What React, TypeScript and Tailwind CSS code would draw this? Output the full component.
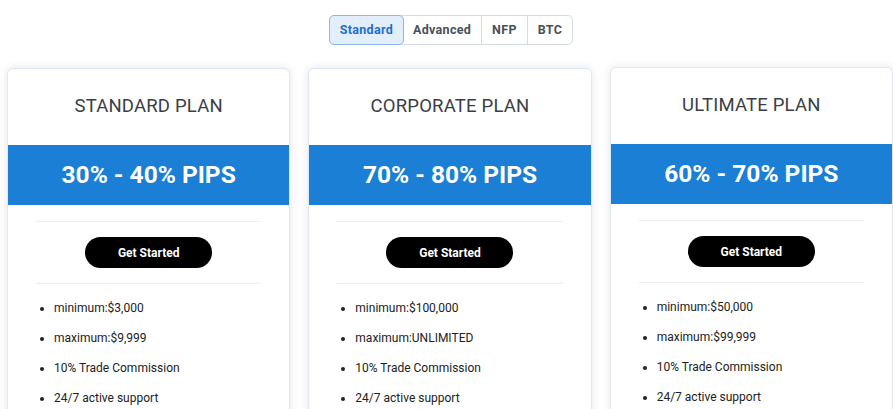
// Pricing plans with a tab switcher

const tabs = ['Standard', 'Advanced', 'NFP', 'BTC'];

type Plan = {
  name: string;
  pips: string;
  min: string;
  max: string;
};

const plans: Plan[] = [
  { name: 'STANDARD PLAN', pips: '30% - 40% PIPS', min: '$3,000', max: '$9,999' },
  { name: 'CORPORATE PLAN', pips: '70% - 80% PIPS', min: '$100,000', max: 'UNLIMITED' },
  { name: 'ULTIMATE PLAN', pips: '60% - 70% PIPS', min: '$50,000', max: '$99,999' },
];

const PlanCard = ({ plan, lifted }: { plan: Plan; lifted?: boolean }) => (
  <div
    className={`bg-white rounded-md border border-[#dde8f6] shadow-[0_0_10px_rgba(0,0,0,0.1)] h-[360px] overflow-hidden ${
      lifted ? '-mt-px' : ''
    }`}
  >
    <div className="h-[76px] pb-px flex items-center justify-center text-[18.5px] text-[#3b3e44] tracking-[0.2px]">
      {plan.name}
    </div>
    <div className="h-[60px] bg-[#1a7fd5] flex items-center justify-center text-white text-[24.5px] font-bold">
      {plan.pips}
    </div>
    <div className="mx-7 mt-4 border-t border-[#eceef1]" />
    <div className="flex justify-center py-[15px]">
      <button className="w-[127px] h-[31px] rounded-full bg-black text-white text-[12px] font-bold">
        Get Started
      </button>
    </div>
    <div className="mx-7 border-t border-[#eceef1]" />
    <ul className="list-disc pl-[46px] pt-[9px] text-[12px] text-[#222] leading-[30px]">
      <li>minimum:{plan.min}</li>
      <li>maximum:{plan.max}</li>
      <li>10% Trade Commission</li>
      <li>24/7 active support</li>
    </ul>
  </div>
);

export default function App() {
  return (
    <div className="w-[893px] h-[409px] overflow-hidden bg-white font-['Roboto',sans-serif]">
      <div className="flex justify-center pt-[15px]">
        <div className="flex h-[30px] ml-[9px] rounded-[5px] border border-[#d6dce4] bg-white">
          {tabs.map((t, i) => (
            <div
              key={t}
              className={`flex items-center justify-center text-[12.5px] font-bold tracking-[0.3px] ${
                i === 0
                  ? 'bg-[#e3eefb] text-[#1d6fd1] border border-[#8db6ea] rounded-[5px] -m-px px-[10px]'
                  : 'text-[#4a505a] border-l border-[#d6dce4] px-[10px]'
              } ${i === 1 ? 'border-l-0' : ''}`}
            >
              {t}
            </div>
          ))}
        </div>
      </div>
      <div className="grid grid-cols-3 gap-[18px] w-[886px] ml-[7px] pt-[23px]">
        {plans.map((p, i) => (
          <PlanCard key={p.name} plan={p} lifted={i === 2} />
        ))}
      </div>
    </div>
  );
}
